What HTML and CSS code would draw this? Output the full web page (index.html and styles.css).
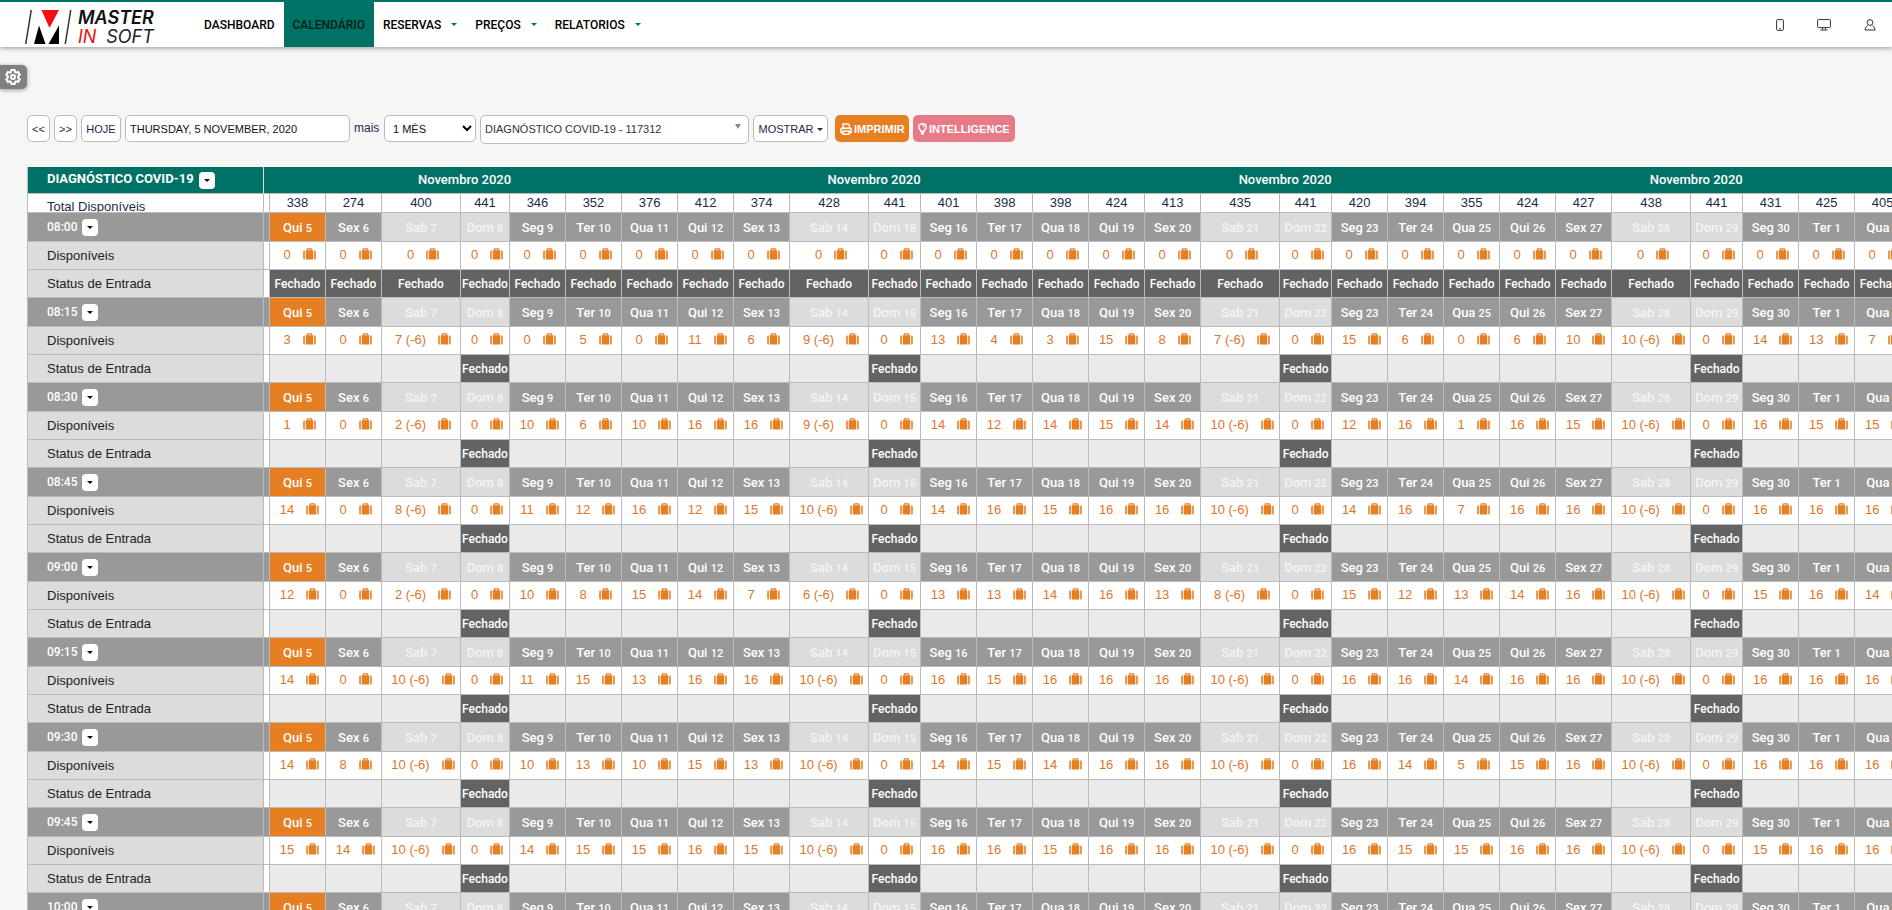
FILE: index.html
```html
<!DOCTYPE html>
<html lang="pt">
<head>
<meta charset="utf-8">
<title>Calendário - Master in Soft</title>
<link rel="stylesheet" href="styles.css">
</head>
<body>
<svg class="sprite" aria-hidden="true">
  <symbol id="suitcase" viewBox="0 0 14 13">
    <path d="M4 2.500V1.400Q4 .3 5.100.3h3.800Q10 .3 10 1.400v1.100h.9V12.500H3.100V2.500zM5.200 2.500h3.600V1.500H5.200z"/>
    <path d="M0 4Q0 2.700 1.300 2.700h1v9.800h-1Q0 12.500 0 11.200zM11.700 2.700h1Q14 2.700 14 4v7.200q0 1.300-1.300 1.300h-1z" opacity=".8"/>
  </symbol>
</svg>

<header class="topbar">
  <a class="logo" href="#" aria-label="Master in Soft">
    <svg class="logo-mark" viewBox="0 0 47 34" aria-hidden="true">
      <path d="M5.500 0H7L1.500 34H0zM45 0h1.500L41 34h-1.500z" fill="#333"/>
      <path d="M16.500 0h17.500l-9.500 18z" fill="#f40d12"/>
      <path d="M14 15.500L20.500 34H9zM34 15.500V34H23.500z" fill="#000"/>
    </svg>
    <span class="logo-text">
      <span class="logo-line logo-bold">MASTER</span>
      <span class="logo-line"><span class="logo-red">IN</span><span>SOFT</span></span>
    </span>
  </a>
  <nav class="menu">
    <a class="menu-item" href="#">DASHBOARD</a>
    <a class="menu-item active" href="#">CALENDÁRIO</a>
    <a class="menu-item has-sub" href="#">RESERVAS</a>
    <a class="menu-item has-sub" href="#">PREÇOS</a>
    <a class="menu-item has-sub" href="#">RELATORIOS</a>
  </nav>
  <div class="tools">
    <a href="#" aria-label="Telemóvel"><svg width="8" height="12" viewBox="0 0 8 12"><rect x=".6" y=".6" width="6.800" height="10.800" rx="1"/><path d="M3 9.800h2"/></svg></a>
    <a href="#" aria-label="Ecrã"><svg width="14" height="12" viewBox="0 0 14 12"><rect x=".6" y=".6" width="12.800" height="8" rx=".8"/><path d="M5.500 9v1.500M8.500 9v1.500M3.500 11h7"/></svg></a>
    <a href="#" aria-label="Utilizador"><svg width="12" height="12" viewBox="0 0 12 12"><circle cx="6" cy="3.500" r="2.900"/><path d="M3.600 6.800Q1 7.800 1 11h10Q11 7.800 8.400 6.800"/></svg></a>
  </div>
</header>

<button class="settings" type="button" aria-label="Definições">
  <svg width="16" height="16" viewBox="0 0 16 16" aria-hidden="true">
    <path d="M6.400 1h3.200l.5 2 1 .6 2-.6 1.600 2.700L13.200 7.200v1.600l1.500 1.500-1.600 2.700-2-.6-1 .6-.5 2H6.400l-.5-2-1-.6-2 .6-1.600-2.700 1.500-1.500V7.200L1.300 5.700 2.900 3l2 .6 1-.6z"/>
    <circle cx="8" cy="8" r="2"/>
  </svg>
</button>

<main class="page">
  <form class="filters">
    <button class="btn arrow" type="button">&lt;&lt;</button>
    <button class="btn arrow" type="button">&gt;&gt;</button>
    <button class="btn today-btn" type="button">HOJE</button>
    <input class="field date" type="text" value="THURSDAY, 5 NOVEMBER, 2020" aria-label="Data">
    <label class="more" for="period">mais</label>
    <div class="select-wrap">
      <select class="field period" id="period"><option>1 MÊS</option></select>
      <svg class="chevron" width="10" height="7" viewBox="0 0 10 7" aria-hidden="true"><path d="M1 1l4 4 4-4"/></svg>
    </div>
    <div class="select-wrap">
      <select class="field product" aria-label="Produto"><option>DIAGNÓSTICO COVID-19 - 117312</option></select>
      <span class="tri" aria-hidden="true"></span>
    </div>
    <button class="btn show" type="button">MOSTRAR<span class="caret"></span></button>
    <button class="btn print" type="button">
      <svg width="12" height="12" viewBox="0 0 12 12" aria-hidden="true"><path d="M3 5V1h5l1.500 1.500V5M3 9.500H.8V6.500Q.8 5.200 2 5.200h8q1.200 0 1.200 1.300v3H9M3 8h6v3.300H3z"/></svg>IMPRIMIR</button>
    <button class="btn intel" type="button">
      <svg width="9" height="12" viewBox="0 0 9 12" aria-hidden="true"><path d="M3 8.500Q3 7.500 2 6.500 .8 5.500.8 4.200.8.800 4.500.8T8.200 4.200Q8.200 5.500 7 6.500 6 7.500 6 8.500zM3 10h3M3.500 11.400h2M4.500 2.600q1.600 0 1.600 1.500"/></svg>INTELLIGENCE</button>
  </form>

  <div class="calendar">
    <table class="grid" id="grid"></table>
  </div>
</main>
<script src="calendar.js"></script>
</body>
</html>
```
FILE: calendar.js
```js
const weekdays = ["Qui", "Sex", "Sab", "Dom", "Seg", "Ter", "Qua"];
const totals = [338, 274, 400, 441, 346, 352, 376, 412, 374, 428, 441, 401, 398, 398,
  424, 413, 435, 441, 420, 394, 355, 424, 427, 438, 441, 431, 425, 405];

// Availability per slot; Saturdays carry an overbooking offset.
const slots = [
  ["08:00", [0, 0, 0, 0, 0, 0, 0, 0, 0, 0, 0, 0, 0, 0, 0, 0, 0, 0, 0, 0, 0, 0, 0, 0, 0, 0, 0, 0]],
  ["08:15", [3, 0, 7, 0, 0, 5, 0, 11, 6, 9, 0, 13, 4, 3, 15, 8, 7, 0, 15, 6, 0, 6, 10, 10, 0, 14, 13, 7]],
  ["08:30", [1, 0, 2, 0, 10, 6, 10, 16, 16, 9, 0, 14, 12, 14, 15, 14, 10, 0, 12, 16, 1, 16, 15, 10, 0, 16, 15, 15]],
  ["08:45", [14, 0, 8, 0, 11, 12, 16, 12, 15, 10, 0, 14, 16, 15, 16, 16, 10, 0, 14, 16, 7, 16, 16, 10, 0, 16, 16, 16]],
  ["09:00", [12, 0, 2, 0, 10, 8, 15, 14, 7, 6, 0, 13, 13, 14, 16, 13, 8, 0, 15, 12, 13, 14, 16, 10, 0, 15, 16, 14]],
  ["09:15", [14, 0, 10, 0, 11, 15, 13, 16, 16, 10, 0, 16, 15, 16, 16, 16, 10, 0, 16, 16, 14, 16, 16, 10, 0, 16, 16, 16]],
  ["09:30", [14, 8, 10, 0, 10, 13, 10, 15, 13, 10, 0, 14, 15, 14, 16, 16, 10, 0, 16, 14, 5, 15, 16, 10, 0, 16, 16, 16]],
  ["09:45", [15, 14, 10, 0, 14, 15, 15, 16, 15, 10, 0, 16, 16, 15, 16, 16, 10, 0, 16, 15, 15, 16, 16, 10, 0, 15, 16, 16]],
  ["10:00", [15, 14, 10, 0, 14, 15, 15, 16, 15, 10, 0, 16, 16, 15, 16, 16, 10, 0, 16, 15, 15, 16, 16, 10, 0, 15, 16, 16]]
];

const dayOfMonth = i => (i + 5 > 30 ? i - 25 : i + 5);
const isSaturday = i => i % 7 === 2;
const isSunday = i => i % 7 === 3;
const menuButton = label =>
  `<button class="drop" type="button" aria-label="Opções ${label}"><span class="caret"></span></button>`;
const cells = fn => totals.map((_, i) => fn(i)).join("");

let html = `<colgroup><col class="c-label"><col class="c-gap">${cells(i =>
  `<col class="${isSaturday(i) ? "c-sat" : i === 3 ? "c-sun-first" : isSunday(i) ? "c-sun" : "c-day"}">`)}</colgroup>`;

html += `<thead><tr class="months"><th class="label">DIAGNÓSTICO COVID-19${menuButton("produto")}</th><th></th>` +
  `<th class="month" colspan="7">Novembro 2020</th>`.repeat(4) + `</tr>
  <tr class="totals"><td class="label">Total Disponíveis</td><td></td>${cells(i => `<td>${totals[i]}</td>`)}</tr></thead>`;

for (const [hour, values] of slots) {
  html += `<tbody><tr class="days"><th class="label">${hour}${menuButton(hour)}</th><td></td>${cells(i =>
    `<th class="${i === 0 ? "today" : isSaturday(i) || isSunday(i) ? "weekend" : "weekday"}">${weekdays[i % 7]} <small>${dayOfMonth(i)}</small></th>`)}</tr>
    <tr class="avail"><th class="label">Disponíveis</th><td></td>${cells(i =>
    `<td class="free"><span class="qty">${values[i]}${isSaturday(i) && values[i] ? " (-6)" : ""}</span><svg class="bag" aria-hidden="true"><use href="#suitcase"/></svg></td>`)}</tr>
    <tr class="status"><th class="label">Status de Entrada</th><td class="gap"></td>${cells(i =>
    hour === "08:00" || isSunday(i) ? `<td class="closed">Fechado</td>` : `<td></td>`)}</tr></tbody>`;
}
document.getElementById("grid").innerHTML = html;
```
FILE: styles.css
```css
* { box-sizing: border-box; }
body {
  margin: 0;
  height: 100vh;
  overflow: hidden;
  background: #f6f6f6;
  color: #1b2a4a;
  font-family: "Liberation Sans", Arial, sans-serif;
  font-size: 13px;
}
a { color: inherit; text-decoration: none; }
button, input, select { font: inherit; color: inherit; margin: 0; }
.sprite { display: none; }

.topbar {
  display: flex;
  height: 47px;
  border-top: 2px solid #007265;
  background: #fff;
  box-shadow: 0 1px 5px rgba(0, 0, 0, .4);
}
.logo { display: flex; align-items: center; gap: 6px; width: 170px; padding: 4px 0 0 25px; color: #222; }
.logo-mark { width: 47px; height: 34px; }
.logo-text { display: flex; flex-direction: column; font-family: Inter, sans-serif; font-style: italic; font-size: 18px; line-height: 19px; }
.logo-line { display: flex; justify-content: space-between; }
.logo-bold { font-weight: 600; color: #111; }
.logo-red { color: #f40d12; }
.menu { display: flex; flex: 1; padding-left: 25px; font-family: Roboto, sans-serif; font-size: 12px; font-weight: 500; color: #000; }
.menu-item { display: flex; align-items: center; padding: 0 9px; }
.menu-item.active { background: #007265; color: #001c18; }
.has-sub::after {
  content: "";
  margin-left: 10px;
  border: 3px solid transparent;
  border-top-color: #007265;
  border-bottom: 0;
}
.tools { display: flex; align-items: center; gap: 33px; padding-right: 16px; }
.tools a { display: flex; }
.tools svg { fill: none; stroke: #333; stroke-width: 1; }

.settings {
  display: flex;
  align-items: center;
  margin-top: 18px;
  width: 27px;
  height: 24px;
  padding: 0 5px;
  border: 0;
  border-radius: 0 5px 5px 0;
  background: #808080;
  box-shadow: 0 1px 4px rgba(0, 0, 0, .4);
}
.settings svg { fill: none; stroke: #fff; stroke-width: 2; flex: none; }

.page { padding: 26px 0 0 27px; }
.filters { display: flex; align-items: flex-start; gap: 4px; }
.btn, .field {
  height: 27px;
  border: 1px solid #bbb;
  border-radius: 5px;
  background: #fff;
  font-size: 11px;
}
.btn { padding: 0; text-align: center; white-space: nowrap; }
.arrow { width: 23px; }
.today-btn { width: 40px; }
.field { color: #111; }
.date { width: 225px; padding: 0 4px; }
.more { width: 26px; line-height: 27px; font-size: 12px; }
.select-wrap { display: grid; align-items: center; }
.select-wrap > * { grid-area: 1 / 1; }
.select-wrap select { appearance: none; }
.period { width: 92px; padding: 0 8px; }
.chevron { justify-self: end; margin-right: 4px; fill: none; stroke: #000; stroke-width: 2; pointer-events: none; }
.product { width: 269px; height: 29px; padding: 0 4px 2px; color: #333; }
.tri { justify-self: end; margin: 0 8px 6px 0; border: 3px solid transparent; border-top: 5px solid #888; border-bottom: 0; pointer-events: none; }
.show { width: 75px; }
.caret { display: inline-block; margin-left: 3px; border: 3px solid transparent; border-top-color: currentColor; border-bottom: 0; vertical-align: middle; }
.print, .intel { display: flex; align-items: center; gap: 2px; padding-left: 5px; border: 0; color: #fff; font-weight: 700; }
.print { width: 74px; margin-left: 3px; background: #e67e22; }
.intel { width: 102px; background: #e77a87; }
.print svg, .intel svg { fill: none; stroke: #fff; stroke-width: 1.400; flex: none; }

.calendar { margin-top: 23px; overflow: hidden; }
.grid { width: 1883px; table-layout: fixed; border-collapse: separate; border-spacing: 0; background: #fff; }
.c-label { width: 237px; }
.c-gap { width: 6px; }
.c-day { width: 56px; }
.c-sat { width: 79px; }
.c-sun-first { width: 49px; }
.c-sun { width: 52px; }
.grid th, .grid td {
  height: 28px;
  padding: 0;
  border-right: 1px solid #bbb;
  border-bottom: 1px solid #bbb;
  font-weight: 400;
  text-align: center;
  white-space: nowrap;
  overflow: hidden;
}
.grid .label { padding-left: 19px; border-left: 1px solid #bbb; text-align: left; }
.grid .months th { height: 27px; border-right: 0; background: #007265; color: #fff; font-family: Roboto, sans-serif; font-weight: 500; }
.grid .months .label { border-right: 1px solid #cfe3e0; font-weight: 700; }
.grid .months .month { padding: 0 19px 2px 0; }
.grid .totals td { height: 19px; line-height: 18px; }
.grid .totals .label { line-height: 10px; vertical-align: bottom; }
.grid .days th { height: 29px; color: #fff; font-family: Roboto, sans-serif; font-weight: 500; }
.grid .days small { font-size: 11px; }
.grid .days .label { font-size: 12px; }
.grid .days .label, .grid .days td, .grid .days .weekday { background: #999; }
.grid .days .today { background: #e67e22; }
.grid .days .weekend { background: #dcdcdc; color: #f4f4f4; }
.grid .avail .label, .grid .status .label { background: #dcdcdc; color: #222; }
.grid .avail .free { padding: 0 0 2px 4px; color: #e0752a; }
.qty { margin-right: 12px; }
.bag { width: 13px; height: 12px; fill: #e67e22; vertical-align: -1px; }
.grid .status td { background: #eaeaea; }
.grid .status .gap { background: #fff; }
.grid .status .closed { background: #636363; color: #fff; font-family: Roboto, sans-serif; font-size: 12px; font-weight: 500; }
.drop {
  width: 16px;
  height: 17px;
  margin-left: 5px;
  padding: 0;
  border: 0;
  border-radius: 4px;
  background: #fff;
  color: #111;
  line-height: 12px;
  vertical-align: middle;
}
.drop .caret { margin-left: 0; }
```
